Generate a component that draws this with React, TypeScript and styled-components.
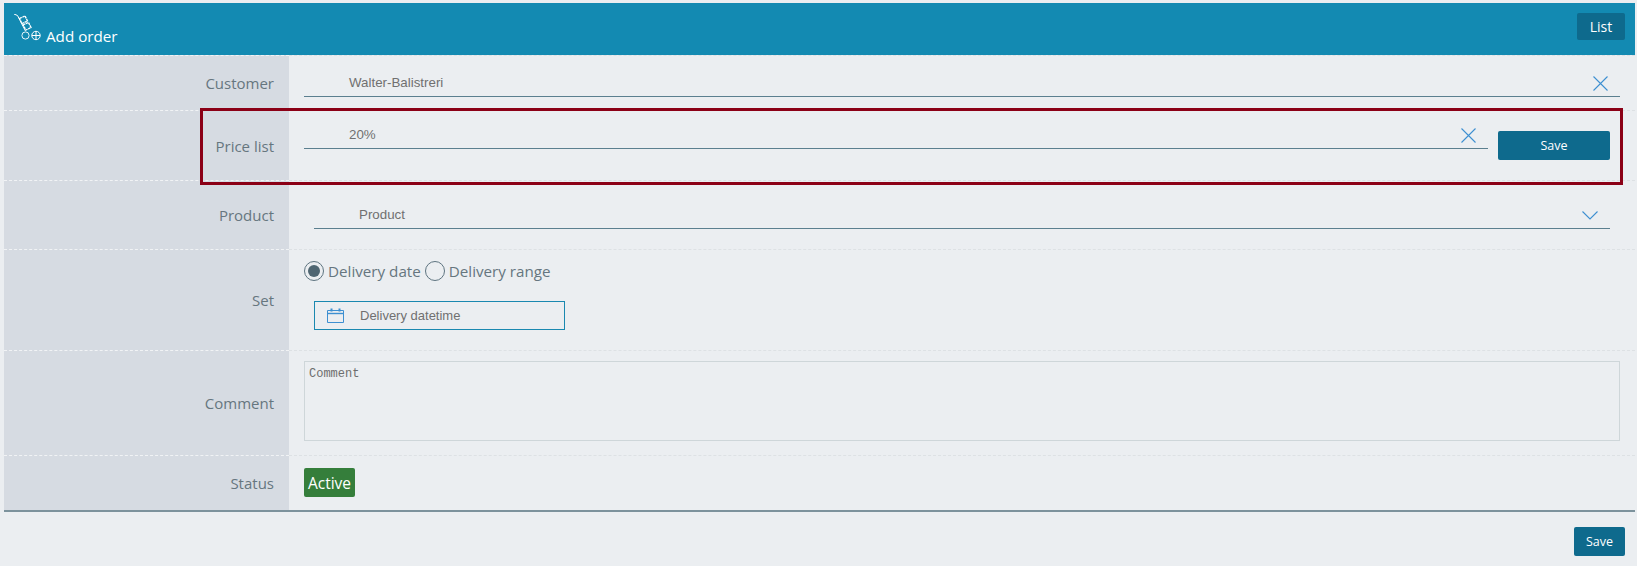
import React from 'react';
import styled, { createGlobalStyle } from 'styled-components';

const GlobalStyle = createGlobalStyle`
  html, body {
    margin: 0;
    padding: 0;
    background: #ebeef1;
    font-family: "Open Sans", "Liberation Sans", sans-serif;
  }
`;

const Page = styled.div`
  width: 1637px;
  height: 566px;
  padding: 3px 2px 0 4px;
  box-sizing: border-box;
  overflow: hidden;
`;

const Header = styled.div`
  height: 52px;
  background: #138ab2;
  display: flex;
  align-items: flex-start;
  justify-content: space-between;
  padding: 10px 10px 0 10px;
  box-sizing: border-box;
`;

const Title = styled.div`
  display: flex;
  align-items: flex-end;
  height: 34px;
  gap: 5px;
  color: #fff;
  font-size: 15.2px;
  line-height: 21px;
`;

const CartSvg = styled.svg`
  align-self: flex-start;
  margin-top: 1px;
  fill: none;
  stroke: #fff;
  stroke-width: 1;
`;

const ListButton = styled.div`
  width: 48px;
  height: 27px;
  background: #0e6a8d;
  border-radius: 2px;
  color: #fff;
  font-size: 14px;
  display: flex;
  align-items: center;
  justify-content: center;
`;

const Form = styled.div`
  border-bottom: 2px solid #7c929c;
`;

const Row = styled.div<{ $height: number }>`
  position: relative;
  display: grid;
  grid-template-columns: 285px 1fr;
  height: ${({ $height }) => $height}px;
`;

const Label = styled.div`
  background: #d6dbe2;
  border-top: 1px dashed #f1f3f5;
  color: #66767f;
  font-size: 15px;
  display: flex;
  align-items: center;
  justify-content: flex-end;
  padding-right: 15px;
  box-sizing: border-box;
`;

const Value = styled.div`
  border-top: 1px dashed #dde1e4;
  box-sizing: border-box;
  padding: 0 15px;
`;

const InputRow = styled.div<{ $inset?: number }>`
  display: flex;
  gap: 10px;
  padding-right: ${({ $inset }) => $inset ?? 0}px;
`;

const Field = styled.div<{ $top: number; $left?: number }>`
  flex: 1;
  height: 27px;
  margin-top: ${({ $top }) => $top}px;
  margin-left: ${({ $left }) => $left ?? 0}px;
  border-bottom: 1px solid #5b7f8f;
  display: flex;
  align-items: flex-end;
  justify-content: space-between;
  padding: 0 12px 6px 45px;
  color: #707070;
  font-family: "Liberation Sans", Arial, sans-serif;
  font-size: 13.33px;
  box-sizing: content-box;
`;

const Clear = styled.svg`
  width: 15px;
  height: 15px;
  flex: none;
  margin-bottom: -1px;
  stroke: #3d8fd1;
  stroke-width: 1.1;
  fill: none;
`;

const Chevron = styled.svg`
  width: 16px;
  height: 9px;
  flex: none;
  margin-bottom: 2px;
  stroke: #3d8fd1;
  stroke-width: 1.1;
  fill: none;
`;

const SaveButton = styled.div<{ $width: number; $top?: number }>`
  width: ${({ $width }) => $width}px;
  height: 29px;
  flex: none;
  margin-top: ${({ $top }) => $top ?? 0}px;
  background: #0e6a8d;
  border-radius: 2px;
  color: #fff;
  font-size: 12.5px;
  display: flex;
  align-items: center;
  justify-content: center;
`;

const Highlight = styled.div`
  position: absolute;
  z-index: 1;
  left: 196px;
  top: -2px;
  width: 1423px;
  height: 77px;
  border: 3px solid #8b0016;
  box-sizing: border-box;
  pointer-events: none;
`;

const RadioGroup = styled.div`
  display: flex;
  align-items: center;
  height: 24px;
  margin-top: 9px;
  color: #66767f;
  font-size: 15.2px;
`;

const RadioOuter = styled.span<{ $checked?: boolean }>`
  width: 20px;
  height: 20px;
  border: 1.5px solid #5e7480;
  border-radius: 50%;
  box-sizing: border-box;
  display: flex;
  align-items: center;
  justify-content: center;
  margin-right: 4px;
  margin-left: ${({ $checked }) => ($checked ? 0 : 4)}px;
  &::after {
    content: '';
    width: 12px;
    height: 12px;
    border-radius: 50%;
    background: ${({ $checked }) => ($checked ? '#4f6672' : 'transparent')};
  }
`;

const DateBox = styled.div`
  width: 251px;
  height: 29px;
  margin: 18px 0 0 10px;
  border: 1px solid #1a88b0;
  box-sizing: border-box;
  display: flex;
  align-items: center;
  padding-left: 12px;
  gap: 16px;
  color: #707070;
  font-family: "Liberation Sans", Arial, sans-serif;
  font-size: 13px;
`;

const Comment = styled.div`
  height: 80px;
  margin-top: 10px;
  border: 1px solid #ced6d9;
  box-sizing: border-box;
  padding: 5px 4px;
  color: #6d6d6d;
  font-family: "Liberation Mono", monospace;
  font-size: 12px;
  line-height: 14px;
`;

const Badge = styled.div`
  display: inline-flex;
  align-items: center;
  justify-content: center;
  width: 51px;
  height: 29px;
  margin-top: 12px;
  background: #357e3b;
  border-radius: 2px;
  color: #fff;
  font-size: 15.5px;
`;

const Footer = styled.div`
  display: flex;
  justify-content: flex-end;
  padding: 15px 10px 0 0;
`;

const CartIcon = () => (
  <CartSvg width="27" height="27" viewBox="0 0 27 27">
    <path d="M0 0l3.5 1.5 8 15.5" />
    <path d="M5.5 4.5l5.5-2.5 2.5 5-5.5 2.5zM9 11l5.5-2.5 2.5 5-5 2.5z" strokeWidth="1.3" strokeDasharray="2.5 0.6" />
    <circle cx="11.5" cy="21.5" r="3.6" strokeWidth="0.9" />
    <circle cx="22" cy="21.5" r="4.2" />
    <path d="M17.8 21.5h8.4M22 17.3v8.4" />
  </CartSvg>
);

const CloseIcon = () => (
  <Clear viewBox="0 0 15 15">
    <path d="M0.5 0.5l14 14M14.5 0.5l-14 14" />
  </Clear>
);

const CalendarIcon = () => (
  <svg width="17" height="15" viewBox="0 0 17 15" fill="none" stroke="#3d8fd1" strokeWidth="1">
    <path d="M0.5 2.5h16v12h-16z" />
    <path d="M0.5 5.5h16" strokeWidth="1.4" />
    <path d="M4.5 0.5v3M12.5 0.5v3" strokeWidth="2" />
  </svg>
);

export default function App() {
  return (
    <Page>
      <GlobalStyle />
      <Header>
        <Title>
          <CartIcon />
          Add order
        </Title>
        <ListButton>List</ListButton>
      </Header>
      <Form>
        <Row $height={55}>
          <Label>Customer</Label>
          <Value>
            <Field $top={7}>
              Walter-Balistreri
              <CloseIcon />
            </Field>
          </Value>
        </Row>
        <Row $height={70}>
          <Label>Price list</Label>
          <Value>
            <InputRow $inset={10}>
              <Field $top={4}>
                20%
                <CloseIcon />
              </Field>
              <SaveButton $width={112} $top={20}>Save</SaveButton>
            </InputRow>
          </Value>
          <Highlight />
        </Row>
        <Row $height={69}>
          <Label>Product</Label>
          <Value>
            <InputRow $inset={10}>
              <Field $top={14} $left={10}>
                Product
                <Chevron viewBox="0 0 16 9">
                  <path d="M0.5 0.5l7.5 7.5 7.5-7.5" />
                </Chevron>
              </Field>
            </InputRow>
          </Value>
        </Row>
        <Row $height={101}>
          <Label>Set</Label>
          <Value>
            <RadioGroup>
              <RadioOuter $checked />
              Delivery date
              <RadioOuter />
              Delivery range
            </RadioGroup>
            <DateBox>
              <CalendarIcon />
              Delivery datetime
            </DateBox>
          </Value>
        </Row>
        <Row $height={105}>
          <Label>Comment</Label>
          <Value>
            <Comment>Comment</Comment>
          </Value>
        </Row>
        <Row $height={55}>
          <Label>Status</Label>
          <Value>
            <Badge>Active</Badge>
          </Value>
        </Row>
      </Form>
      <Footer>
        <SaveButton $width={51}>Save</SaveButton>
      </Footer>
    </Page>
  );
}
